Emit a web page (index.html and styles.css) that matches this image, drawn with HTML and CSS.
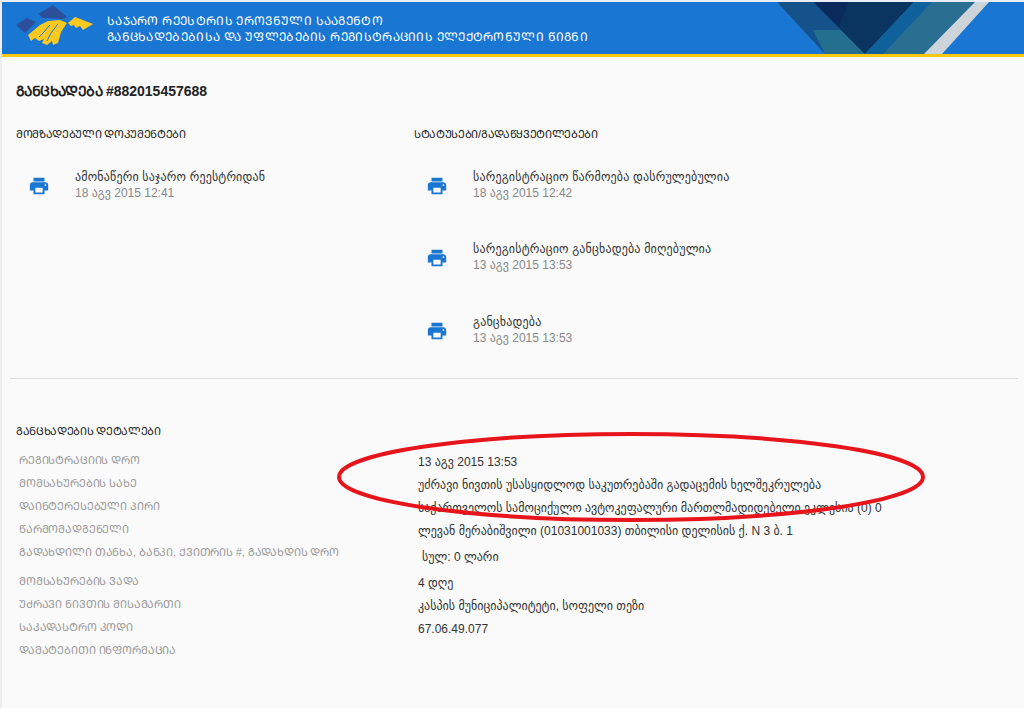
FILE: index.html
```html
<!DOCTYPE html>
<html lang="ka">
<head>
<meta charset="utf-8">
<title>განცხადება</title>
<link rel="stylesheet" href="styles.css">
</head>
<body>
<header class="banner">
  <svg class="logo" viewBox="0 0 80 42" width="80" height="42">
    <path class="logo-dark" d="M2 20 13 13 22 17 11 28Z"/>
    <path class="logo-dark" d="M24 9 39 0 53 12 48 14 36 13 29 13Z"/>
    <path class="logo-yellow" d="M14 30 26 20 34 16 46 15 53 18 47 27 44 38 39 40 38 36 33 40 28 38 30 34 25 36 21 33 17 36Z"/>
    <path class="logo-cut" d="M44 19 37 28 33 36M36 20 29 28 25 32"/>
    <path class="logo-yellow" d="M54 18 61 12 79 19 69 25 66 21 62 23 60 20 57 21Z"/>
  </svg>
  <div class="banner-title">
    <div>ᲡᲐᲯᲐᲠᲝ ᲠᲔᲔᲡᲢᲠᲘᲡ ᲔᲠᲝᲕᲜᲣᲚᲘ ᲡᲐᲐᲒᲔᲜᲢᲝ</div>
    <div>ᲒᲐᲜᲪᲮᲐᲓᲔᲑᲔᲑᲘᲡᲐ ᲓᲐ ᲣᲤᲚᲔᲑᲔᲑᲘᲡ ᲠᲔᲒᲘᲡᲢᲠᲐᲪᲘᲘᲡ ᲔᲚᲔᲥᲢᲠᲝᲜᲣᲚᲘ ᲬᲘᲒᲜᲘ</div>
  </div>
  <svg class="banner-art" viewBox="0 0 212 52" width="212" height="52">
    <polygon fill="#15528c" points="0,0 36,0 88,52 48,52"/>
    <polygon fill="#256f8e" points="36,28 48,52 88,52 64,28"/>
    <polygon fill="#0a2a5c" points="36,0 137,0 88,52"/>
    <polygon fill="#0a3560" points="72,0 137,0 88,52 62,24"/>
    <polygon fill="#2a6f92" points="137,0 198,0 147,52 88,52"/>
    <polygon fill="#0f619b" points="137,0 155,0 106,52 88,52"/>
    <polygon fill="#cdd4da" points="198,0 212,0 165,52 147,52"/>
  </svg>
</header>
<main class="page">
  <h1 class="title"><span class="title-word">ᲒᲐᲜᲪᲮᲐᲓᲔᲑᲐ</span> #882015457688</h1>
  <section class="columns">
    <div class="column">
      <h2 class="heading">ᲛᲝᲛᲖᲐᲓᲔᲑᲣᲚᲘ ᲓᲝᲙᲣᲛᲔᲜᲢᲔᲑᲘ</h2>
      <div class="item">
        <svg class="print" viewBox="0 0 24 24"><path d="M19 8H5c-1.66 0-3 1.34-3 3v6h4v4h12v-4h4v-6c0-1.66-1.34-3-3-3zm-3 11H8v-5h8v5zm3-7c-.55 0-1-.45-1-1s.45-1 1-1 1 .45 1 1-.45 1-1 1zm-1-9H6v4h12V3z"/></svg>
        <div><div class="item-name">ამონაწერი საჯარო რეესტრიდან</div><div class="item-date">18 აგვ 2015 12:41</div></div>
      </div>
    </div>
    <div class="column">
      <h2 class="heading">ᲡᲢᲐᲢᲣᲡᲔᲑᲘ/ᲒᲐᲓᲐᲬᲧᲕᲔᲢᲘᲚᲔᲑᲔᲑᲘ</h2>
      <div class="item">
        <svg class="print" viewBox="0 0 24 24"><path d="M19 8H5c-1.66 0-3 1.34-3 3v6h4v4h12v-4h4v-6c0-1.66-1.34-3-3-3zm-3 11H8v-5h8v5zm3-7c-.55 0-1-.45-1-1s.45-1 1-1 1 .45 1 1-.45 1-1 1zm-1-9H6v4h12V3z"/></svg>
        <div><div class="item-name">სარეგისტრაციო წარმოება დასრულებულია</div><div class="item-date">18 აგვ 2015 12:42</div></div>
      </div>
      <div class="item">
        <svg class="print" viewBox="0 0 24 24"><path d="M19 8H5c-1.66 0-3 1.34-3 3v6h4v4h12v-4h4v-6c0-1.66-1.34-3-3-3zm-3 11H8v-5h8v5zm3-7c-.55 0-1-.45-1-1s.45-1 1-1 1 .45 1 1-.45 1-1 1zm-1-9H6v4h12V3z"/></svg>
        <div><div class="item-name">სარეგისტრაციო განცხადება მიღებულია</div><div class="item-date">13 აგვ 2015 13:53</div></div>
      </div>
      <div class="item">
        <svg class="print" viewBox="0 0 24 24"><path d="M19 8H5c-1.66 0-3 1.34-3 3v6h4v4h12v-4h4v-6c0-1.66-1.34-3-3-3zm-3 11H8v-5h8v5zm3-7c-.55 0-1-.45-1-1s.45-1 1-1 1 .45 1 1-.45 1-1 1zm-1-9H6v4h12V3z"/></svg>
        <div><div class="item-name">განცხადება</div><div class="item-date">13 აგვ 2015 13:53</div></div>
      </div>
    </div>
  </section>
  <hr class="divider">
  <section class="details">
    <h2 class="heading">ᲒᲐᲜᲪᲮᲐᲓᲔᲑᲘᲡ ᲓᲔᲢᲐᲚᲔᲑᲘ</h2>
    <div class="grid">
      <div class="label">ᲠᲔᲒᲘᲡᲢᲠᲐᲪᲘᲘᲡ ᲓᲠᲝ</div><div class="value">13 აგვ 2015 13:53</div>
      <div class="label">ᲛᲝᲛᲡᲐᲮᲣᲠᲔᲑᲘᲡ ᲡᲐᲮᲔ</div><div class="value">უძრავი ნივთის უსასყიდლოდ საკუთრებაში გადაცემის ხელშეკრულება</div>
      <div class="label">ᲓᲐᲘᲜᲢᲔᲠᲔᲡᲔᲑᲣᲚᲘ ᲞᲘᲠᲘ</div><div class="value">საქართველოს სამოციქულო ავტოკეფალური მართლმადიდებელი ეკლესია (0) 0</div>
      <div class="label">ᲬᲐᲠᲛᲝᲛᲐᲓᲒᲔᲜᲔᲚᲘ</div><div class="value">ლევან მერაბიშვილი (01031001033) თბილისი დელისის ქ. N 3 ბ. 1</div>
      <div class="label">ᲒᲐᲓᲐᲮᲓᲘᲚᲘ ᲗᲐᲜᲮᲐ, ᲑᲐᲜᲙᲘ, ᲥᲕᲘᲗᲠᲘᲡ #, ᲒᲐᲓᲐᲮᲓᲘᲡ ᲓᲠᲝ</div><div class="value indented">სულ: 0 ლარი</div>
      <div class="label">ᲛᲝᲛᲡᲐᲮᲣᲠᲔᲑᲘᲡ ᲕᲐᲓᲐ</div><div class="value">4 დღე</div>
      <div class="label">ᲣᲫᲠᲐᲕᲘ ᲜᲘᲕᲗᲘᲡ ᲛᲘᲡᲐᲛᲐᲠᲗᲘ</div><div class="value">კასპის მუნიციპალიტეტი, სოფელი თეზი</div>
      <div class="label">ᲡᲐᲙᲐᲓᲐᲡᲢᲠᲝ ᲙᲝᲓᲘ</div><div class="value">67.06.49.077</div>
      <div class="label">ᲓᲐᲛᲐᲢᲔᲑᲘᲗᲘ ᲘᲜᲤᲝᲠᲛᲐᲪᲘᲐ</div><div class="value"></div>
    </div>
  </section>
  <svg class="circle" viewBox="0 0 592 96" width="592" height="96"><ellipse cx="296" cy="46" rx="292" ry="43"/></svg>
</main>
</body>
</html>
```
FILE: styles.css
```css
* { box-sizing: border-box; }
html, body { margin: 0; height: 100%; }
body {
  background: #fafafa;
  border-left: 2px solid #eee;
  border-top: 2px solid #e8eef4;
  color: #333;
  font-family: "Liberation Sans", "DejaVu Sans", sans-serif;
  font-size: 12px;
  overflow: hidden;
}
.banner {
  position: relative;
  display: flex;
  align-items: center;
  height: 55px;
  padding-left: 12px;
  background: #1976d2;
  border-bottom: 3px solid #fbc914;
  overflow: hidden;
}
.logo { flex: none; margin-top: -4px; margin-right: 13px; }
.logo-dark { fill: #2b4f98; }
.logo-yellow { fill: #fdc921; }
.logo-cut { fill: none; stroke: #1976d2; stroke-width: 1; }
.banner-title {
  padding-top: 1px;
  color: #fff;
  font-size: 12px;
  line-height: 16px;
  letter-spacing: 0.3px;
}
.banner-art { position: absolute; left: 775px; top: 0; }
.page { position: relative; padding: 0 6px 0 8px; }
.title {
  margin: 25px 0 0 6px;
  font-size: 14px;
  line-height: 18px;
  font-weight: 700;
  color: #222;
}
.title-word { letter-spacing: -0.6px; }
.columns { display: grid; grid-template-columns: 398px 1fr; margin: 26px 0 0 6px; }
.heading {
  margin: 0;
  font-size: 11px;
  line-height: 16px;
  font-weight: 400;
  letter-spacing: -0.32px;
  color: #222;
}
.column .heading { margin-bottom: 26.5px; }
.item { display: flex; height: 72.5px; padding-left: 12px; align-items: flex-start; }
.print { flex: none; width: 22px; height: 22px; margin-top: 6px; margin-right: 25px; fill: #1976d2; }
.item-name { line-height: 16px; letter-spacing: 0.17px; color: #333; }
.item-date { line-height: 16px; color: #888; }
.divider { margin: -8px 0 0; border: 0; border-top: 1px solid #ddd; }
.details { margin: 44px 0 0 6px; }
.grid {
  display: grid;
  grid-template-columns: 402px 1fr;
  grid-template-rows: repeat(4, 23px) 29px repeat(4, 23px);
  margin-top: 11px;
}
.label { padding-left: 3px; font-size: 11px; line-height: 20px; letter-spacing: -0.14px; color: #999; }
.value { line-height: 24px; color: #333; }
.indented { padding-left: 4px; padding-top: 3px; }
.circle { position: absolute; left: 333px; top: 349px; fill: none; stroke: #e8141c; stroke-width: 4; }
```
